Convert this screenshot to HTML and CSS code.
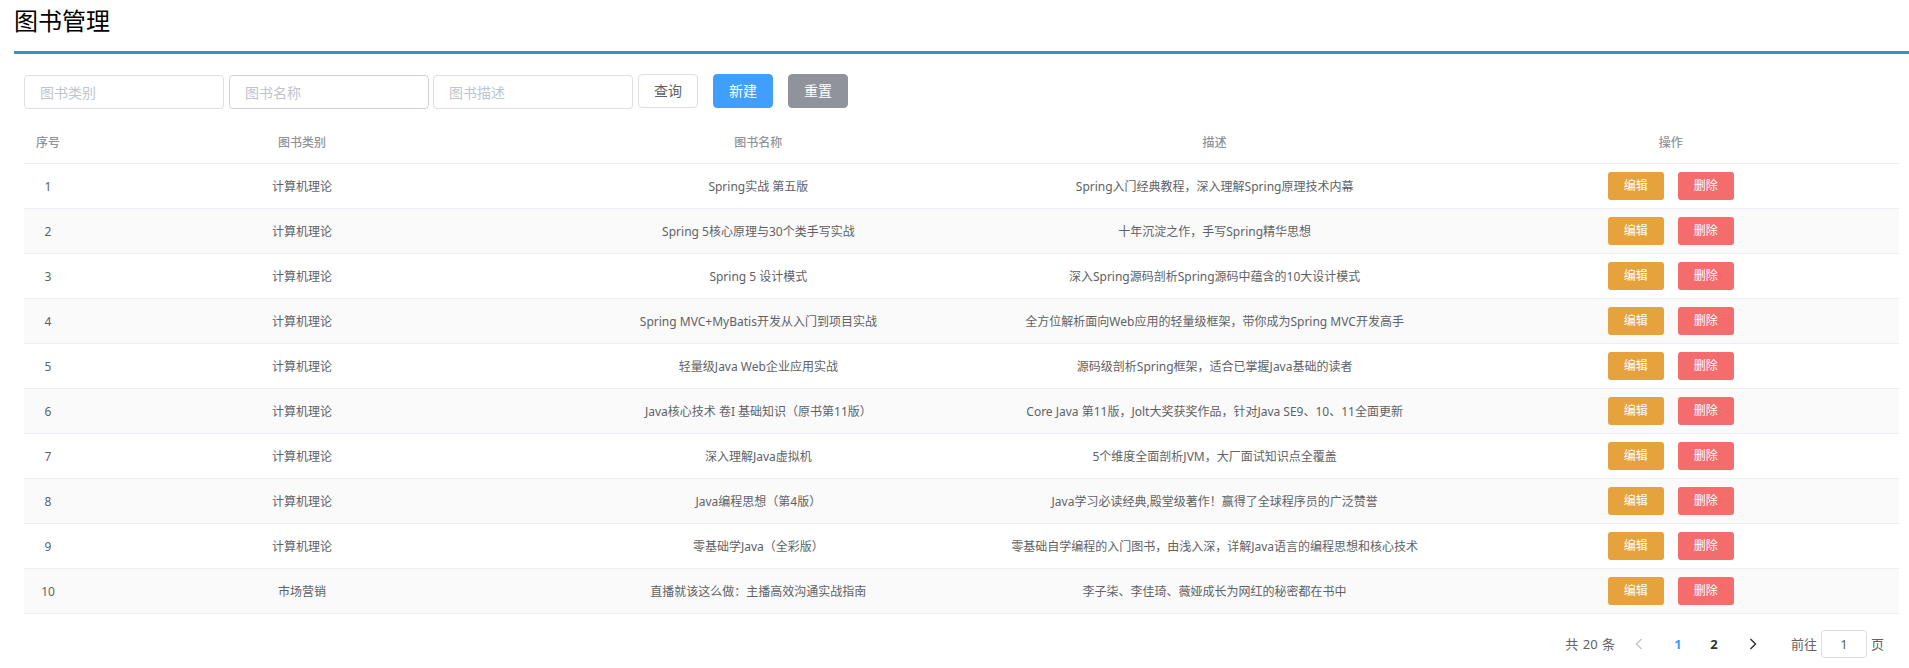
FILE: index.html
```html
<!DOCTYPE html>
<html lang="zh-CN">
<head>
<meta charset="utf-8">
<title>图书管理</title>
<link rel="stylesheet" href="styles.css">
</head>
<body>
<div class="page">
  <header class="page-head"><h1 class="page-title">图书管理</h1></header>
  <main class="content">
    <form class="toolbar">
      <input class="field" placeholder="图书类别">
      <input class="field" placeholder="图书名称">
      <input class="field" placeholder="图书描述">
      <button type="button" class="btn btn-plain">查询</button>
      <button type="button" class="btn btn-primary">新建</button>
      <button type="button" class="btn btn-gray">重置</button>
    </form>
    <table class="grid">
      <colgroup><col class="col-index"><col><col><col><col></colgroup>
      <thead><tr><th>序号</th><th>图书类别</th><th>图书名称</th><th>描述</th><th>操作</th></tr></thead>
      <tbody>
        <tr><td>1</td><td>计算机理论</td><td>Spring实战 第五版</td><td>Spring入门经典教程，深入理解Spring原理技术内幕</td><td><div class="ops"><button class="mini mini-edit">编辑</button><button class="mini mini-del">删除</button></div></td></tr>
        <tr><td>2</td><td>计算机理论</td><td>Spring 5核心原理与30个类手写实战</td><td>十年沉淀之作，手写Spring精华思想</td><td><div class="ops"><button class="mini mini-edit">编辑</button><button class="mini mini-del">删除</button></div></td></tr>
        <tr><td>3</td><td>计算机理论</td><td>Spring 5 设计模式</td><td>深入Spring源码剖析Spring源码中蕴含的10大设计模式</td><td><div class="ops"><button class="mini mini-edit">编辑</button><button class="mini mini-del">删除</button></div></td></tr>
        <tr><td>4</td><td>计算机理论</td><td>Spring MVC+MyBatis开发从入门到项目实战</td><td>全方位解析面向Web应用的轻量级框架，带你成为Spring MVC开发高手</td><td><div class="ops"><button class="mini mini-edit">编辑</button><button class="mini mini-del">删除</button></div></td></tr>
        <tr><td>5</td><td>计算机理论</td><td>轻量级Java Web企业应用实战</td><td>源码级剖析Spring框架，适合已掌握Java基础的读者</td><td><div class="ops"><button class="mini mini-edit">编辑</button><button class="mini mini-del">删除</button></div></td></tr>
        <tr><td>6</td><td>计算机理论</td><td>Java核心技术 卷I 基础知识（原书第11版）</td><td>Core Java 第11版，Jolt大奖获奖作品，针对Java SE9、10、11全面更新</td><td><div class="ops"><button class="mini mini-edit">编辑</button><button class="mini mini-del">删除</button></div></td></tr>
        <tr><td>7</td><td>计算机理论</td><td>深入理解Java虚拟机</td><td>5个维度全面剖析JVM，大厂面试知识点全覆盖</td><td><div class="ops"><button class="mini mini-edit">编辑</button><button class="mini mini-del">删除</button></div></td></tr>
        <tr><td>8</td><td>计算机理论</td><td>Java编程思想（第4版）</td><td>Java学习必读经典,殿堂级著作！赢得了全球程序员的广泛赞誉</td><td><div class="ops"><button class="mini mini-edit">编辑</button><button class="mini mini-del">删除</button></div></td></tr>
        <tr><td>9</td><td>计算机理论</td><td>零基础学Java（全彩版）</td><td>零基础自学编程的入门图书，由浅入深，详解Java语言的编程思想和核心技术</td><td><div class="ops"><button class="mini mini-edit">编辑</button><button class="mini mini-del">删除</button></div></td></tr>
        <tr><td>10</td><td>市场营销</td><td>直播就该这么做：主播高效沟通实战指南</td><td>李子柒、李佳琦、薇娅成长为网红的秘密都在书中</td><td><div class="ops"><button class="mini mini-edit">编辑</button><button class="mini mini-del">删除</button></div></td></tr>
      </tbody>
    </table>
    <nav class="pager">
      <span class="pager-total">共 20 条</span>
      <button class="pager-arrow" aria-label="上一页"><svg viewBox="0 0 10 14" width="10" height="14"><path d="M7.5 2 2.5 7l5 5" fill="none" stroke="#c0c4cc" stroke-width="1.4"/></svg></button>
      <span class="pager-num is-active">1</span>
      <span class="pager-num">2</span>
      <button class="pager-arrow" aria-label="下一页"><svg viewBox="0 0 10 14" width="10" height="14"><path d="M2.5 2l5 5-5 5" fill="none" stroke="#303133" stroke-width="1.4"/></svg></button>
      <span class="pager-jump">前往<input class="pager-input" value="1">页</span>
    </nav>
  </main>
</div>
</body>
</html>
```
FILE: styles.css
```css
* { box-sizing: border-box; }
html, body { margin: 0; background: #fff; }
body {
  font-family: "Noto Sans", "Noto Sans CJK SC", "Liberation Sans", sans-serif;
  font-size: 12px;
  color: #606266;
  height: 668px;
  overflow: hidden;
}
.page { padding: 0 0 0 14px; }
.page-head { height: 54px; border-bottom: 3px solid #3e8fbe; }
.page-title {
  margin: 0;
  padding-top: 4px;
  font-size: 24px;
  line-height: 33px;
  font-weight: 400;
  color: #000;
}
.content { padding: 0 10px 0 10px; }
.toolbar { display: flex; align-items: flex-start; padding-top: 20px; height: 55px; font-size: 14px; }
.field {
  width: 200px;
  height: 34px;
  margin-top: 1px;
  margin-right: 5px;
  padding: 0 15px;
  border: 1px solid #dcdfe6;
  border-radius: 4px;
  font: inherit;
  color: #606266;
  background: #fff;
  outline: none;
}
.field:nth-child(2) { margin-right: 4px; border-color: #cfd1dc; }
.field::placeholder { color: #c0c4cc; opacity: 1; }
.btn {
  width: 60px;
  height: 34px;
  padding: 0;
  border: 1px solid #dcdfe6;
  border-radius: 4px;
  font: inherit;
  line-height: 1;
  background: #fff;
  color: #606266;
}
.btn-plain { margin-right: 15px; }
.btn-primary { border-color: #409eff; background: #409eff; color: #fff; margin-right: 15px; }
.btn-gray { border-color: #909399; background: #909399; color: #fff; }
.grid { width: 100%; table-layout: fixed; border-collapse: collapse; }
.col-index { width: 50px; }
.grid th, .grid td {
  padding: 0;
  text-align: center;
  border-bottom: 1px solid #ebeef5;
  height: 45px;
  line-height: 23px;
  font-weight: 400;
}
.grid td:not(:last-child) { padding-top: 2px; }
.grid th:first-child, .grid td:first-child { padding-right: 2px; }
.grid th { height: 54px; color: #909399; font-weight: 500; padding-top: 14px; }
.grid tbody tr:nth-child(even) td { background: #fafafa; }
.ops { display: flex; justify-content: center; gap: 14px; }
.mini {
  width: 56px;
  height: 28px;
  padding: 0;
  border: 0;
  border-radius: 3px;
  font: inherit;
  line-height: 1;
  color: #fff;
}
.mini-edit { background: #e6a23c; }
.mini-del { background: #f56c6c; }
.pager {
  display: flex;
  align-items: center;
  justify-content: flex-end;
  height: 28px;
  margin-top: 16px;
  padding-right: 15px;
  font-size: 13px;
  color: #606266;
}
.pager-total { margin-right: 18px; word-spacing: 1px; }
.pager-arrow {
  width: 12px;
  height: 28px;
  padding: 0;
  border: 0;
  background: none;
  display: flex;
  align-items: center;
  justify-content: center;
}
.pager-num { width: 36px; text-align: center; font-weight: 700; color: #303133; }
.pager-num.is-active { color: #409eff; margin-left: 15px; }
.pager-num + .pager-arrow { margin-left: 15px; }
.pager-jump { display: flex; align-items: center; margin-left: 32px; }
.pager-input {
  width: 46px;
  height: 28px;
  margin: 0 4px;
  padding: 0;
  border: 1px solid #dcdfe6;
  border-radius: 3px;
  text-align: center;
  font: inherit;
  color: #606266;
  outline: none;
}
```
